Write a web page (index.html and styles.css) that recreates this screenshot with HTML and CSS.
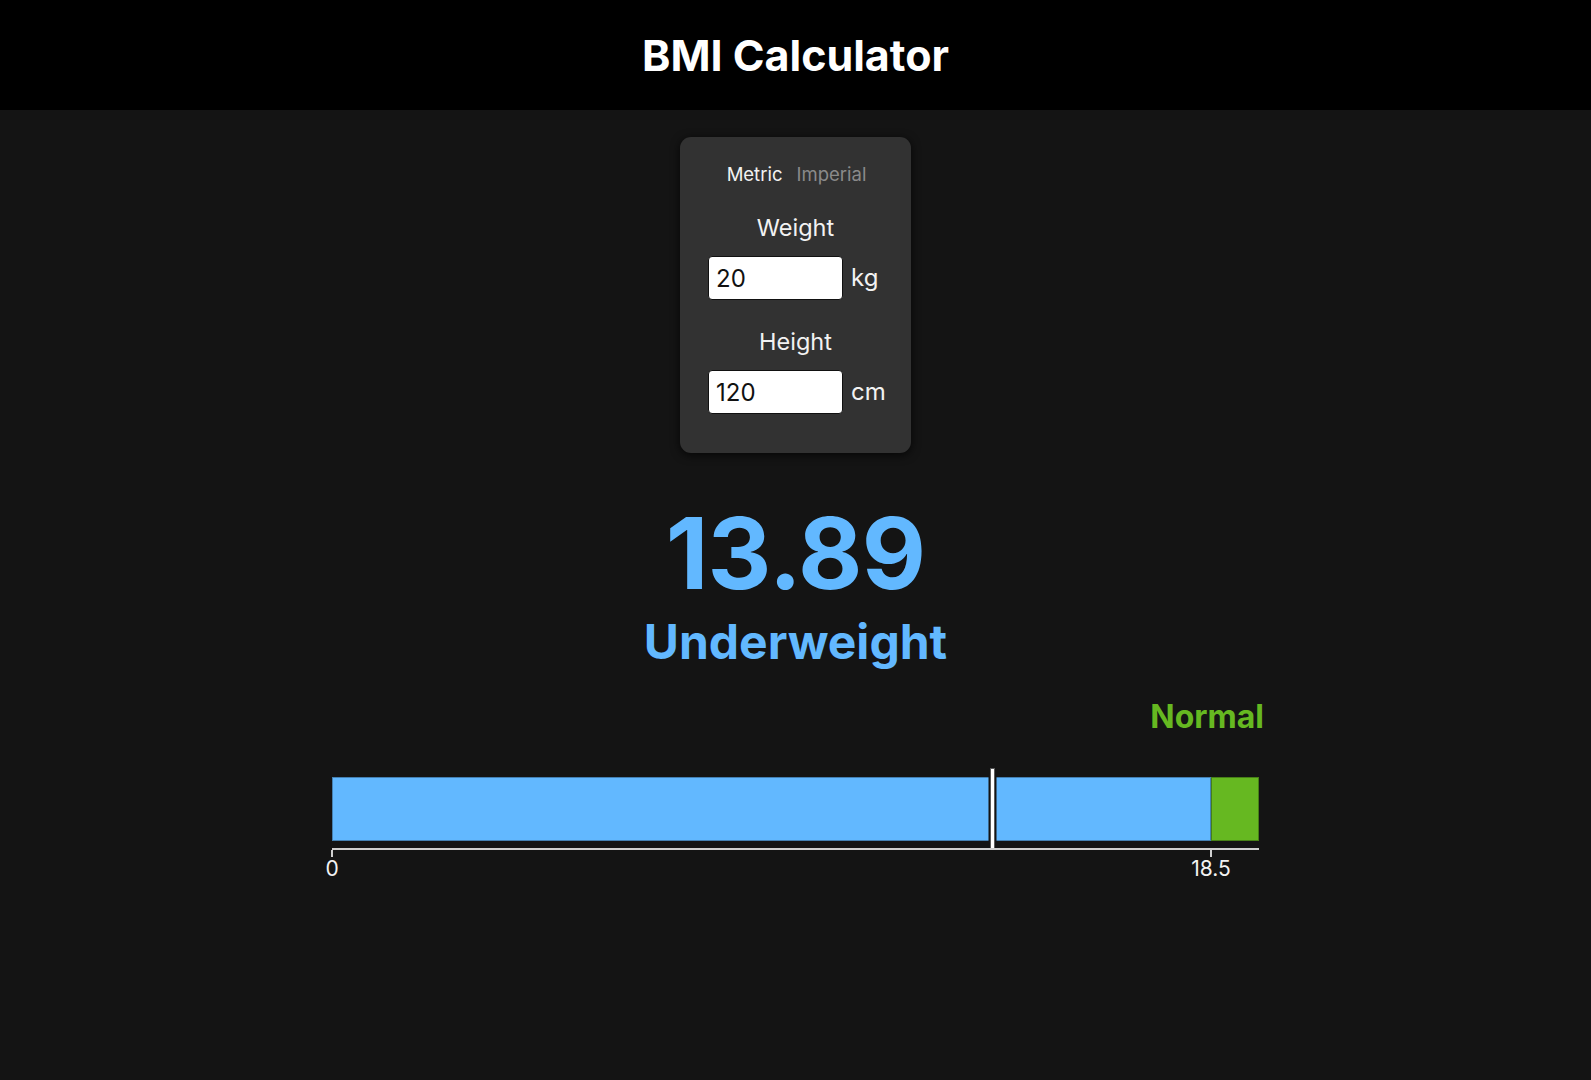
FILE: index.html
```html
<!DOCTYPE html>
<html lang="en">
<head>
<meta charset="utf-8">
<title>BMI Calculator</title>
<link rel="stylesheet" href="styles.css">
</head>
<body>
<header class="topbar">
  <h1 class="title">BMI Calculator</h1>
</header>
<main class="content">
  <section class="card">
    <div class="tabs">
      <button class="tab tab-active">Metric</button>
      <button class="tab">Imperial</button>
    </div>
    <div class="field">
      <label class="field-label" for="weight">Weight</label>
      <div class="field-row">
        <input class="field-input" id="weight" type="text" value="20">
        <span class="unit">kg</span>
      </div>
    </div>
    <div class="field">
      <label class="field-label" for="height">Height</label>
      <div class="field-row">
        <input class="field-input" id="height" type="text" value="120">
        <span class="unit">cm</span>
      </div>
    </div>
  </section>

  <section class="result">
    <div class="bmi-value">13.89</div>
    <div class="bmi-category">Underweight</div>
  </section>

  <section class="scale">
    <div class="scale-head">
      <span class="scale-name">Normal</span>
    </div>
    <div class="bar">
      <div class="seg seg-under" style="width: 879px"></div>
      <div class="seg seg-normal" style="width: 48px"></div>
      <div class="marker" style="left: 660px"></div>
    </div>
    <div class="axis">
      <div class="tick" style="left: 0px"><span class="tick-label">0</span></div>
      <div class="tick" style="left: 879px"><span class="tick-label">18.5</span></div>
    </div>
  </section>
</main>
</body>
</html>
```

FILE: styles.css
```css
* {
  box-sizing: border-box;
}

html, body {
  margin: 0;
  padding: 0;
}

body {
  background: #141414;
  color: #f2f2f2;
  font-family: Inter, "Noto Sans", sans-serif;
  min-height: 1080px;
}

.topbar {
  height: 110px;
  background: #000;
  display: flex;
  align-items: center;
  justify-content: center;
}

.title {
  margin: 0;
  font-size: 43px;
  font-weight: 700;
  color: #fff;
  line-height: 1;
}

.content {
  display: flex;
  flex-direction: column;
  align-items: center;
  padding-top: 27px;
}

.card {
  width: 231px;
  height: 316px;
  background: #323232;
  border-radius: 11px;
  box-shadow: 0 2px 10px rgba(0, 0, 0, 0.75);
  padding: 26px 28px 39px;
  display: flex;
  flex-direction: column;
}

.tabs {
  display: flex;
  justify-content: center;
  gap: 14px;
  height: 22px;
  margin-bottom: 29px;
  margin-left: 2px;
}

.tab {
  background: none;
  border: none;
  padding: 0;
  font-family: inherit;
  font-size: 18.5px;
  line-height: 22px;
  color: #8a8a8a;
  cursor: pointer;
}

.tab-active {
  color: #f2f2f2;
}

.field {
  display: flex;
  flex-direction: column;
}

.field + .field {
  margin-top: 28px;
}

.field-label {
  display: block;
  text-align: center;
  font-size: 23.5px;
  line-height: 28px;
  height: 28px;
  margin-bottom: 14px;
  color: #f2f2f2;
}

.field-row {
  display: flex;
  align-items: center;
  gap: 8px;
  height: 44px;
}

.field-input {
  width: 135px;
  height: 44px;
  border: 1.5px solid #111;
  border-radius: 4px;
  background: #fff;
  color: #111;
  font-family: inherit;
  font-size: 24px;
  padding: 0 7px;
  outline: none;
}

.unit {
  font-size: 24px;
  color: #f2f2f2;
  line-height: 1;
}

.result {
  margin-top: 51px;
  display: flex;
  flex-direction: column;
  align-items: center;
  color: #62b8ff;
}

.bmi-value {
  font-size: 99px;
  line-height: 99px;
  font-weight: 700;
  letter-spacing: -0.8px;
}

.bmi-category {
  margin-top: 15px;
  font-size: 48px;
  line-height: 48px;
  font-weight: 700;
}

.scale {
  width: 927px;
  margin-top: 35px;
}

.scale-head {
  display: flex;
  justify-content: flex-end;
  height: 32px;
  margin-right: -5px;
  margin-bottom: 44px;
}

.scale-name {
  font-size: 32px;
  line-height: 32px;
  font-weight: 700;
  color: #66b821;
}

.bar {
  position: relative;
  display: flex;
  height: 64px;
}

.seg {
  height: 64px;
  border: 1px solid rgba(0, 0, 0, 0.3);
}

.seg-under {
  background: #62b8ff;
}

.seg-normal {
  background: #66b821;
}

.marker {
  position: absolute;
  top: -9px;
  width: 5px;
  height: 82px;
  margin-left: -2.5px;
  background: #fff;
  border: 1px solid #5a5a5a;
  box-shadow: 0 0 0 1.5px #141414;
}

.axis {
  position: relative;
  margin-top: 7px;
  height: 34px;
  border-top: 2px solid #cfcfcf;
}

.tick {
  position: absolute;
  top: 0;
  width: 2px;
  height: 7px;
  margin-left: -1px;
  background: #cfcfcf;
}

.tick-label {
  position: absolute;
  top: 8px;
  left: 1px;
  transform: translateX(-50%);
  font-size: 21px;
  line-height: 21px;
  color: #f2f2f2;
  white-space: nowrap;
}
```
